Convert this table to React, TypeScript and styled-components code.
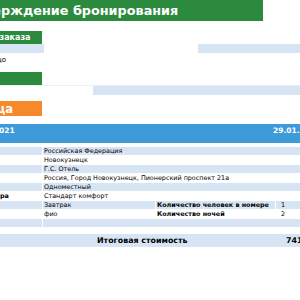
import React from 'react';
import styled, { createGlobalStyle } from 'styled-components';

const Global = createGlobalStyle`
  html, body { margin: 0; padding: 0; background: #ffffff; overflow: hidden; }
  body { font-family: "DejaVu Sans", Verdana, sans-serif; }
`;

const LIGHT = '#d7e4f4';
const GREEN = '#2b8a3e';
const ORANGE = '#f68a2a';
const BLUE = '#3d9bd9';
const COLS = '102px 112px 119px 1fr';

const Viewport = styled.div`
  width: 300px;
  height: 300px;
  overflow: hidden;
`;

const Page = styled.div`
  margin-left: -60px;
  width: 460px;
  display: flex;
  flex-direction: column;
`;

const TitleBar = styled.div`
  width: 323px;
  height: 21px;
  box-sizing: border-box;
  padding-left: 7px;
  background: ${GREEN};
  color: #fff;
  font-weight: bold;
  font-size: 12.8px;
  display: flex;
  align-items: center;
  white-space: nowrap;
`;

const SectionLabel = styled.div<{ $tone: 'green' | 'orange'; $h: number; $size: number; $mt: number }>`
  width: 102px;
  height: ${(p) => p.$h}px;
  margin-top: ${(p) => p.$mt}px;
  box-sizing: border-box;
  padding-left: 4px;
  background: ${(p) => (p.$tone === 'green' ? GREEN : ORANGE)};
  color: #fff;
  font-weight: bold;
  font-size: ${(p) => p.$size}px;
  display: flex;
  align-items: center;
  white-space: nowrap;
`;

const Strip = styled.div<{ $cols: string; $h: number }>`
  display: grid;
  grid-template-columns: ${(p) => p.$cols};
  height: ${(p) => p.$h}px;
`;

const Block = styled.div<{ $shade?: boolean }>`
  background: ${(p) => (p.$shade ? LIGHT : 'transparent')};
`;

const ContactRow = styled.div`
  height: 13px;
  padding-left: 2px;
  font-size: 7px;
  color: #000;
  display: flex;
  align-items: center;
  white-space: nowrap;
`;

const Rule = styled.div`
  height: 1px;
  background: #e8eff8;
`;

const HeaderBar = styled.div`
  margin-top: 8px;
  height: 19px;
  background: ${BLUE};
  display: grid;
  grid-template-columns: 102px 231px 1fr;
  color: #fff;
  font-weight: bold;
  font-size: 7.5px;
`;

const HeaderCell = styled.div<{ $col: number; $align: 'center' | 'left' }>`
  grid-column: ${(p) => p.$col};
  text-align: ${(p) => p.$align};
  padding-top: 2px;
  white-space: nowrap;
`;

const Table = styled.div`
  margin-top: 4px;
  display: flex;
  flex-direction: column;
  row-gap: 1px;
`;

const Row = styled.div`
  display: grid;
  grid-template-columns: ${COLS};
  column-gap: 1px;
  height: 8px;
`;

const Cell = styled.div<{ $shade: boolean; $bold?: boolean; $span?: number; $pad?: number }>`
  grid-column: span ${(p) => p.$span ?? 1};
  background: ${(p) => (p.$shade ? LIGHT : 'transparent')};
  font-size: 6.4px;
  line-height: 8px;
  font-weight: ${(p) => (p.$bold ? 'bold' : 'normal')};
  color: #000;
  padding-left: ${(p) => p.$pad ?? 1}px;
  white-space: nowrap;
  overflow: hidden;
`;

const TotalBar = styled.div`
  margin-top: 7px;
  height: 13px;
  background: ${LIGHT};
  display: grid;
  grid-template-columns: 335px 1fr;
  align-items: center;
  font-weight: bold;
  font-size: 7.9px;
  color: #000;
`;

const TotalLabel = styled.div`
  padding-left: 157px;
  white-space: nowrap;
`;

const TotalValue = styled.div`
  padding-left: 11px;
  white-space: nowrap;
`;

type Line = { label: string; value: string; label2?: string; value2?: string };

const lines: Line[] = [
  { label: 'Страна', value: 'Российская Федерация' },
  { label: 'Город', value: 'Новокузнецк' },
  { label: 'Отель', value: 'Г.С. Отель' },
  { label: 'Адрес', value: 'Россия, Город Новокузнецк, Пионерский проспект 21а' },
  { label: 'Размещение', value: 'Одноместный' },
  { label: 'Категория номера', value: 'Стандарт комфорт' },
  { label: 'Питание', value: 'Завтрак', label2: 'Количество человек в номере', value2: '1' },
  { label: 'Гость', value: 'фио', label2: 'Количество ночей', value2: '2' },
  { label: '', value: '' },
];

export default function App() {
  return (
    <>
      <Global />
      <Viewport>
        <Page>
          <TitleBar>Подтверждение бронирования</TitleBar>
          <SectionLabel $tone="green" $h={13} $size={8} $mt={10}>
            Параметры заказа
          </SectionLabel>
          <Strip $cols="104px 154px 1fr" $h={9}>
            <Block $shade />
            <Block />
            <Block $shade />
          </Strip>
          <ContactRow>Контактное лицо</ContactRow>
          <SectionLabel $tone="green" $h={13} $size={8} $mt={6}>
            Гость
          </SectionLabel>
          <Rule />
          <Strip $cols="153px 1fr" $h={9}>
            <Block />
            <Block $shade />
          </Strip>
          <SectionLabel $tone="orange" $h={15} $size={11.5} $mt={6}>
            Гостиница
          </SectionLabel>
          <HeaderBar>
            <HeaderCell $col={1} $align="center">28.01.2021</HeaderCell>
            <HeaderCell $col={3} $align="left">29.01.2021</HeaderCell>
          </HeaderBar>
          <Table>
            {lines.map((l, i) => {
              const shade = i % 2 === 0;
              return (
                <Row key={i}>
                  <Cell $shade={shade} $bold>{l.label}</Cell>
                  {l.label2 ? (
                    <>
                      <Cell $shade={shade}>{l.value}</Cell>
                      <Cell $shade={shade} $bold>{l.label2}</Cell>
                      <Cell $shade={shade} $pad={5}>{l.value2}</Cell>
                    </>
                  ) : (
                    <Cell $shade={shade} $span={3}>{l.value}</Cell>
                  )}
                </Row>
              );
            })}
          </Table>
          <TotalBar>
            <TotalLabel>Итоговая стоимость</TotalLabel>
            <TotalValue>7410,00</TotalValue>
          </TotalBar>
        </Page>
      </Viewport>
    </>
  );
}
